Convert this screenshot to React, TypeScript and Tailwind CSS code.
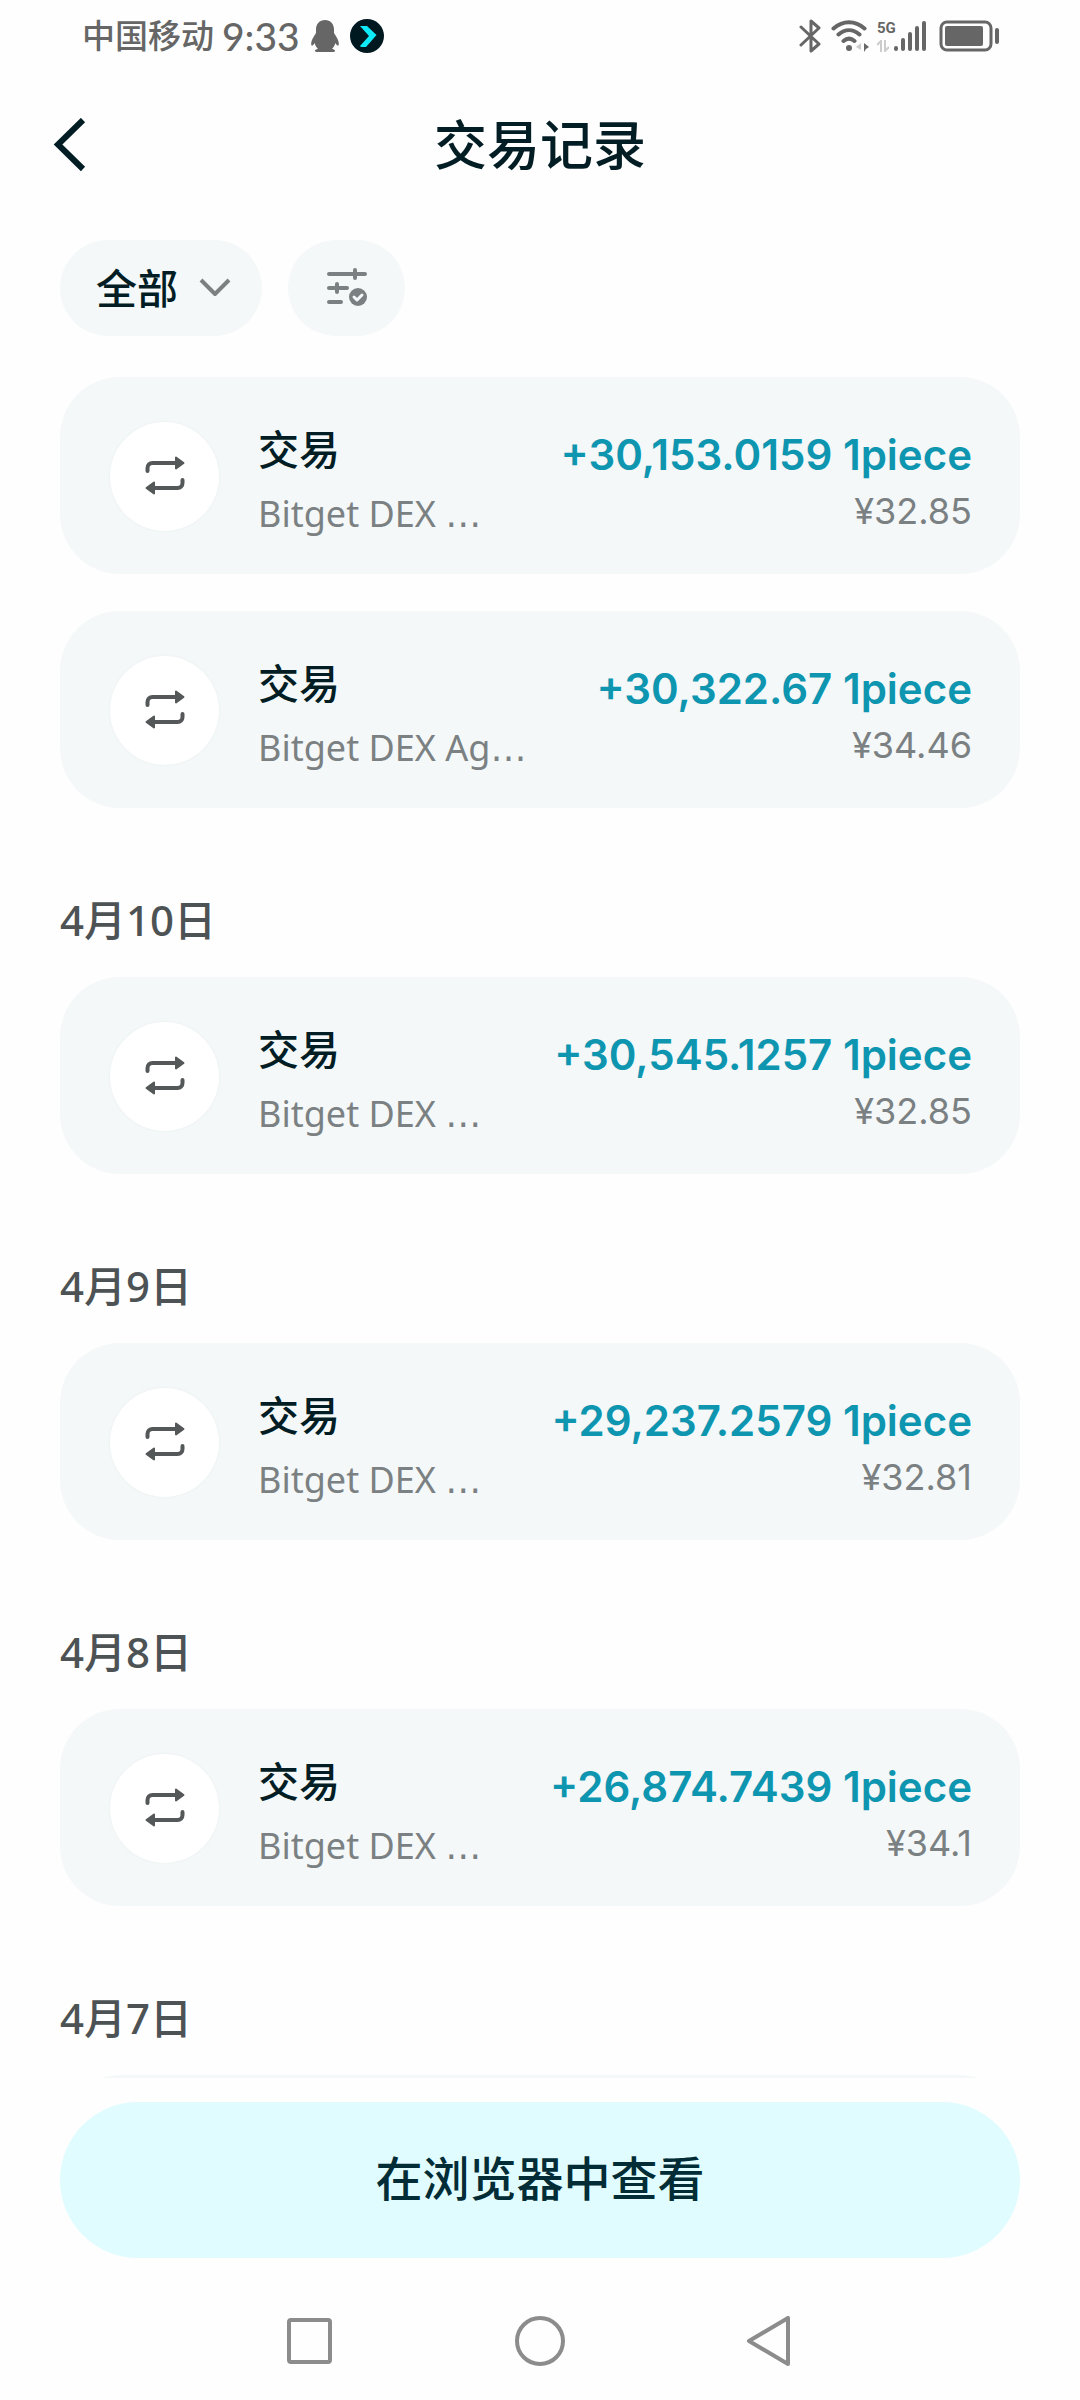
import React from "react";

type Transaction = {
  title: string;
  source: string;
  amount: string;
  value: string;
};

type Group = {
  date?: string;
  items: Transaction[];
};

const groups: Group[] = [
  {
    items: [
      { title: "交易", source: "Bitget DEX ", amount: "+30,153.0159 1piece", value: "¥32.85" },
      { title: "交易", source: "Bitget DEX Ag", amount: "+30,322.67 1piece", value: "¥34.46" },
    ],
  },
  {
    date: "4月10日",
    items: [{ title: "交易", source: "Bitget DEX ", amount: "+30,545.1257 1piece", value: "¥32.85" }],
  },
  {
    date: "4月9日",
    items: [{ title: "交易", source: "Bitget DEX ", amount: "+29,237.2579 1piece", value: "¥32.81" }],
  },
  {
    date: "4月8日",
    items: [{ title: "交易", source: "Bitget DEX ", amount: "+26,874.7439 1piece", value: "¥34.1" }],
  },
  { date: "4月7日", items: [] },
];

function StatusBar() {
  return (
    <div className="flex h-[72px] shrink-0 items-center justify-between pr-20 pl-[82px] text-[#666666]">
      <div className="flex items-center">
        <span className="text-[33px] leading-10 font-medium">中国移动</span>
        <span className="ml-2 font-['Lato'] text-[39px] leading-10 font-medium">9:33</span>
        <svg className="ml-[11px] h-8 w-7" viewBox="0 0 28 32" fill="currentColor" aria-hidden="true">
          <path d="M14 0C8.500 0 5 4 5 9.500V13C3 16 .5 20 .2 23c-.2 2 .5 3 1.300 2.500.8-.4 1.600-1.500 2.200-2.500.5 2.300 1.600 4.200 3.200 5.700-1.700.5-3 1.200-3 2.100 0 .8 1 1.200 3 1.200h14.200c2 0 3-.4 3-1.200 0-.9-1.300-1.600-3-2.100 1.600-1.500 2.700-3.400 3.200-5.700.6 1 1.400 2.100 2.200 2.500.8.5 1.500-.5 1.300-2.500-.3-3-2.800-7-4.800-10V9.500C23 4 19.500 0 14 0Z" />
        </svg>
        <svg className="ml-[11px] size-[34px]" viewBox="0 0 34 34" aria-hidden="true">
          <circle cx="17" cy="17" r="17" fill="#001820" />
          <path d="M10 7h7l9.500 9L16 28H11l-1-1 9-10Z" fill="#0feaf8" />
        </svg>
      </div>
      <div className="flex items-center">
        <svg className="h-[34px] w-[22px]" viewBox="0 0 22 34" fill="none" stroke="currentColor" strokeWidth="3" strokeLinecap="round" strokeLinejoin="round" aria-hidden="true">
          <path d="M2 8l18 17-8 7V2l8 7L2 26" />
        </svg>
        <svg className="ml-[10px] h-[34px] w-[38px]" viewBox="0 0 38 34" fill="none" stroke="currentColor" strokeWidth="4" strokeLinecap="round" aria-hidden="true">
          <path d="M2.500 9.500C12 1.200 24 1.200 33.500 9.500M7.500 15.500c6.500-5.600 14.500-5.600 21 0M12.500 22c3.500-3 7.500-3 11 0" />
          <circle cx="18" cy="29" r="3" fill="currentColor" stroke="none" />
          <path d="M30 24v7l-5-3Z" fill="#cccccc" stroke="none" />
          <path d="M33 24l5 4-3 2-2 3Z" fill="currentColor" stroke="none" />
        </svg>
        <div className="ml-2 flex w-4 flex-col items-start">
          <span className="font-['Roboto'] text-[15px] leading-4 font-bold">5G</span>
          <svg className="mt-1 h-3 w-3" viewBox="0 0 12 12" fill="none" stroke="#cccccc" strokeWidth="2" aria-hidden="true">
            <path d="M4 12V1L0 5M8 0v11l4-4" />
          </svg>
        </div>
        <svg className="h-8 w-[34px]" viewBox="0 0 34 32" stroke="currentColor" strokeWidth="4" strokeLinecap="round" aria-hidden="true">
          <path d="M3 28v1M10 20v9M17 14v15M24 8v21M31 3v26" />
        </svg>
        <svg className="ml-3 h-8 w-[61px]" viewBox="0 0 61 32" fill="none" aria-hidden="true">
          <rect x="2" y="2" width="50" height="28" rx="6" stroke="currentColor" strokeWidth="3" />
          <rect x="6" y="6" width="38" height="20" rx="2" fill="currentColor" />
          <rect x="56" y="8" width="4" height="16" rx="2" fill="currentColor" />
        </svg>
      </div>
    </div>
  );
}

function SwapIcon() {
  return (
    <svg className="size-10" viewBox="0 0 40 40" fill="none" stroke="currentColor" strokeWidth="4" strokeLinecap="round" strokeLinejoin="round" aria-hidden="true">
      <path d="M2.500 15v-3c0-3 2-5 5-5H31M37.500 24v3c0 3-2 5-5 5H9" />
      <path d="M31 1.500L38.500 7 31 12.500ZM9 26.500L1.500 32 9 37.500Z" fill="currentColor" strokeWidth="2" />
    </svg>
  );
}

function TransactionCard({ item }: { item: Transaction }) {
  return (
    <li className="flex items-center rounded-[60px] bg-[#f4f8f9] pt-[35px] pr-12 pb-[34px] pl-[50px]">
      <span className="flex size-[109px] shrink-0 items-center justify-center rounded-full bg-white text-[#555858] shadow-[0_0_3px_#e9eeee]">
        <SwapIcon />
      </span>
      <div className="ml-[39px] min-w-0 flex-1">
        <p className="text-[41px] leading-[75px] font-medium text-[#021d24]">{item.title}</p>
        <p className="text-[36px] leading-[53px] whitespace-pre text-[#7b8182]">
          {item.source}
          <span className="font-['DejaVu_Sans'] leading-none">…</span>
        </p>
      </div>
      <div className="shrink-0 pt-[2px] text-right font-['Inter']">
        <p className="text-[42px] leading-[68px] font-semibold text-[#0e95b0]">{item.amount}</p>
        <p className="text-[36px] leading-[44px] text-[#7b8182]">{item.value}</p>
      </div>
    </li>
  );
}

export default function App() {
  return (
    <div className="flex h-screen flex-col overflow-hidden bg-[#fefefe] font-['Noto_Sans','Noto_Sans_CJK_SC',sans-serif]">
      <StatusBar />

      <header className="grid h-[145px] shrink-0 grid-cols-[1fr_auto_1fr] items-center px-[52px]">
        <button type="button" aria-label="返回" className="w-fit text-[#021d24]">
          <svg className="h-[54px] w-[34px]" viewBox="0 0 34 54" fill="none" stroke="currentColor" strokeWidth="6" aria-hidden="true">
            <path d="M31 2L6 26.500 31 51" />
          </svg>
        </button>
        <h1 className="text-[53px] leading-[72px] font-medium text-[#021d24]">交易记录</h1>
      </header>

      <div className="flex shrink-0 gap-[26px] px-[60px] pt-[23px]">
        <button type="button" className="flex h-24 items-center rounded-full bg-[#f4f8f9] pr-[31px] pl-9 text-[41px] leading-[60px] font-medium text-[#021d24]">
          全部
          <svg className="ml-[21px] h-5 w-8" viewBox="0 0 32 20" fill="none" stroke="#7b8182" strokeWidth="4" strokeLinejoin="round" aria-hidden="true">
            <path d="M2 2l14 14L30 2" />
          </svg>
        </button>
        <button type="button" aria-label="筛选" className="flex h-24 w-[117px] items-center justify-center rounded-full bg-[#f4f8f9] text-[#7b8182]">
          <svg className="size-10" viewBox="0 0 40 40" fill="none" stroke="currentColor" strokeWidth="4" strokeLinecap="round" strokeLinejoin="round" aria-hidden="true">
            <path d="M2 6h36M28 2v8M2 20h18M10 16v8M2 34h12" />
            <circle cx="31" cy="29" r="9" fill="currentColor" stroke="none" />
            <path d="M27 29l3 3 5-5" stroke="#f4f8f9" strokeWidth="3" />
          </svg>
        </button>
      </div>

      <main className="min-h-0 flex-1 overflow-hidden px-[60px] pt-[41px]">
        {groups.map((group, index) => (
          <section key={index}>
            {group.date && (
              <h2 className="pt-[54px] text-[42px] leading-[115px] font-medium text-[#4d5354]">{group.date}</h2>
            )}
            <ul className="flex flex-col gap-[37px]">
              {group.items.map((item, i) => (
                <TransactionCard key={i} item={item} />
              ))}
              {group.items.length === 0 && <li className="h-[197px] rounded-[60px] bg-[#f4f8f9]" />}
            </ul>
          </section>
        ))}
      </main>

      <footer className="shrink-0 px-[60px] pt-6">
        <button type="button" className="h-[156px] w-full rounded-full bg-[#e0fcfe] pb-1 text-[47px] font-medium text-[#022d36]">
          在浏览器中查看
        </button>
      </footer>

      <nav className="flex h-[142px] shrink-0 items-center justify-center gap-[180px] pt-6 text-[#8c8c8c]">
        <button type="button" aria-label="最近任务">
          <svg className="size-[50px]" viewBox="0 0 50 50" fill="none" stroke="currentColor" strokeWidth="4" aria-hidden="true">
            <rect x="4" y="4" width="41" height="42" rx="2" />
          </svg>
        </button>
        <button type="button" aria-label="主屏幕">
          <svg className="size-[50px]" viewBox="0 0 50 50" fill="none" stroke="currentColor" strokeWidth="4" aria-hidden="true">
            <circle cx="25" cy="25" r="23" />
          </svg>
        </button>
        <button type="button" aria-label="返回上一页">
          <svg className="size-[50px]" viewBox="0 0 50 50" fill="none" stroke="currentColor" strokeWidth="4" strokeLinejoin="round" aria-hidden="true">
            <path d="M43 2v46L4 25Z" />
          </svg>
        </button>
      </nav>
    </div>
  );
}
